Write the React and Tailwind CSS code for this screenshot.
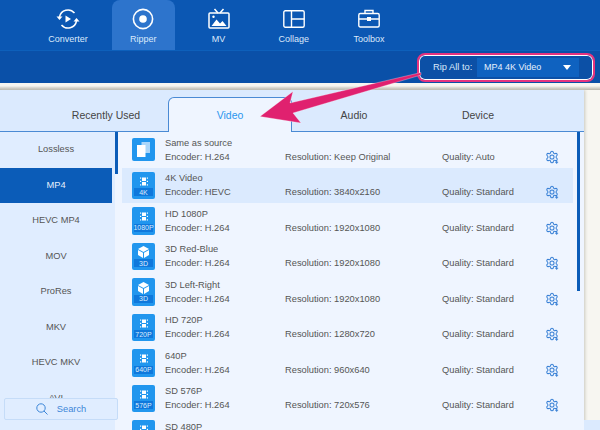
const navItems = [
  { label: 'Converter', icon: <ConverterIcon /> },
  { label: 'Ripper', icon: <RipperIcon />, active: true },
  { label: 'MV', icon: <MvIcon /> },
  { label: 'Collage', icon: <CollageIcon /> },
  { label: 'Toolbox', icon: <ToolboxIcon /> },
];

const categories = ['Lossless', 'MP4', 'HEVC MP4', 'MOV', 'ProRes', 'MKV', 'HEVC MKV', 'AVI'];

const formats = [
  { name: 'Same as source', encoder: 'H.264', resolution: 'Keep Original', quality: 'Auto', kind: 'source' },
  { name: '4K Video', encoder: 'HEVC', resolution: '3840x2160', quality: 'Standard', tag: '4K', kind: 'film', active: true },
  { name: 'HD 1080P', encoder: 'H.264', resolution: '1920x1080', quality: 'Standard', tag: '1080P', kind: 'film' },
  { name: '3D Red-Blue', encoder: 'H.264', resolution: '1920x1080', quality: 'Standard', tag: '3D', kind: 'cube' },
  { name: '3D Left-Right', encoder: 'H.264', resolution: '1920x1080', quality: 'Standard', tag: '3D', kind: 'cube' },
  { name: 'HD 720P', encoder: 'H.264', resolution: '1280x720', quality: 'Standard', tag: '720P', kind: 'film' },
  { name: '640P', encoder: 'H.264', resolution: '960x640', quality: 'Standard', tag: '640P', kind: 'film' },
  { name: 'SD 576P', encoder: 'H.264', resolution: '720x576', quality: 'Standard', tag: '576P', kind: 'film' },
  { name: 'SD 480P', encoder: 'H.264', resolution: '640x480', quality: 'Standard', tag: '480P', kind: 'film' },
];

function ConverterIcon() {
  return (
    <svg width="26" height="24" viewBox="0 0 26 24" fill="none" stroke="#fff" strokeWidth="1.5">
      <path d="M4.500 10A8.600 8.600 0 0 1 19.500 6" />
      <path d="M21.500 14A8.600 8.600 0 0 1 6.500 18" />
      <path d="M1.500 9.500h6l-3 3.500z" fill="#fff" stroke="none" />
      <path d="M18.500 14.500h6l-3-3.500z" fill="#fff" stroke="none" />
      <path d="M10.500 8.500l5.500 3.500-5.500 3.500z" fill="#fff" stroke="none" />
    </svg>
  );
}

function RipperIcon() {
  return (
    <svg width="22" height="22" viewBox="0 0 22 22" fill="none">
      <circle cx="11" cy="11" r="9.600" stroke="#fff" strokeWidth="1.600" />
      <circle cx="11" cy="11" r="3.800" fill="#fff" />
    </svg>
  );
}

function MvIcon() {
  return (
    <svg width="22" height="22" viewBox="0 0 22 22" fill="none" stroke="#fff" strokeWidth="1.500">
      <path d="M6.500 1l3.500 4M15.500 1L12 5" />
      <rect x="1" y="5" width="20" height="15" rx="1" />
      <path d="M3.500 18l5-6.500 3.500 4 2.500-2.500 4 5z" fill="#fff" stroke="none" />
      <circle cx="5.500" cy="8.800" r="1.200" fill="#fff" stroke="none" />
    </svg>
  );
}

function CollageIcon() {
  return (
    <svg width="22" height="18" viewBox="0 0 22 18" fill="none" stroke="#fff" strokeWidth="1.400">
      <rect x="0.800" y="0.800" width="20.400" height="16.400" rx="1.500" />
      <path d="M8.500 1v16M8.500 9h13" />
    </svg>
  );
}

function ToolboxIcon() {
  return (
    <svg width="22" height="19" viewBox="0 0 22 19" fill="none" stroke="#fff" strokeWidth="1.400">
      <rect x="0.800" y="4.500" width="20.400" height="13.500" rx="1.500" />
      <path d="M7 4.500V1.500h8v3M1 10h20" />
      <rect x="9" y="8" width="4" height="4" fill="#fff" stroke="none" />
    </svg>
  );
}

function GearIcon() {
  return (
    <svg width="14" height="14" viewBox="0 0 24 24" fill="none" stroke="#3b82d6" strokeWidth="1.800">
      <path d="M9.671 4.136a2.34 2.34 0 0 1 4.659 0 2.34 2.34 0 0 0 3.319 1.915 2.34 2.34 0 0 1 2.33 4.033 2.34 2.34 0 0 0 0 3.831 2.34 2.34 0 0 1-2.33 4.033 2.34 2.34 0 0 0-3.319 1.915 2.34 2.34 0 0 1-4.659 0 2.34 2.34 0 0 0-3.32-1.915 2.34 2.34 0 0 1-2.33-4.033 2.34 2.34 0 0 0 0-3.831A2.34 2.34 0 0 1 6.35 6.051a2.34 2.34 0 0 0 3.32-1.915" />
      <circle cx="12" cy="12" r="3.500" />
      <path d="M20 18.500v5M17.500 21h5" />
    </svg>
  );
}

function FormatGlyph({ kind }) {
  if (kind === 'cube') {
    return (
      <svg width="11" height="12" viewBox="0 0 11 12">
        <path d="M5.500 0L11 3 5.500 6 0 3z" fill="#fff" />
        <path d="M0 4l5 2.800V12L0 9zM11 4L6 6.800V12l5-3z" fill="#fff" />
      </svg>
    );
  }
  return (
    <svg width="8" height="9" viewBox="0 0 8 9" fill="#fff">
      <rect x="2" y="0.500" width="4" height="3.500" />
      <rect x="2" y="5" width="4" height="3.500" />
      <rect x="0" y="0.500" width="1.200" height="1.200" />
      <rect x="6.800" y="0.500" width="1.200" height="1.200" />
      <rect x="0" y="3.800" width="1.200" height="1.200" />
      <rect x="6.800" y="3.800" width="1.200" height="1.200" />
      <rect x="0" y="7.300" width="1.200" height="1.200" />
      <rect x="6.800" y="7.300" width="1.200" height="1.200" />
    </svg>
  );
}

function FormatIcon({ kind, tag }) {
  if (kind === 'source') {
    return (
      <div className="flex h-[23px] w-[23px] shrink-0 items-center justify-center rounded-[2px] bg-[#2196ee]">
        <svg width="13" height="15" viewBox="0 0 13 15">
          <rect x="4.500" y="0" width="8.500" height="11" fill="#a9d6fa" />
          <rect x="0" y="3" width="8.500" height="12" fill="#fff" />
        </svg>
      </div>
    );
  }
  return (
    <div className="flex h-[27.5px] w-[23px] shrink-0 flex-col items-center rounded-[2px] bg-[#2196ee] pt-[3px]">
      <div className="flex h-[13.5px] items-center">
        <FormatGlyph kind={kind} />
      </div>
      <div className="flex h-[8px] w-[19px] items-center justify-center bg-[#0f78dc] text-[7px] leading-none text-[#dcecfc]">
        {tag}
      </div>
    </div>
  );
}

function FormatRow({ format }) {
  return (
    <div className={`flex h-[35.5px] shrink-0 items-center gap-[10px] pl-[10px] ${format.active ? 'bg-[#dbeafe]' : ''}`}>
      <FormatIcon kind={format.kind} tag={format.tag} />
      <div className="flex flex-col text-[9.3px] leading-[14px] text-[#555]">
        <div>{format.name}</div>
        <div className="flex items-center">
          <span className="w-[120px]">Encoder: {format.encoder}</span>
          <span className="w-[157px]">Resolution: {format.resolution}</span>
          <span className="w-[103px]">Quality: {format.quality}</span>
          <GearIcon />
        </div>
      </div>
    </div>
  );
}

export default function App() {
  return (
    <div className="relative flex h-[430px] w-[600px] flex-col overflow-hidden bg-[#f7f6f1] font-['Liberation_Sans',sans-serif]">
      {/* top nav */}
      <div className="flex h-[50px] shrink-0 gap-[12.25px] bg-[#0b57b3] pl-[36.5px]">
        {navItems.map((item) => (
          <div
            key={item.label}
            className={`flex w-[63px] flex-col items-center rounded-t-lg ${item.active ? 'bg-[#2d74cc]' : ''}`}
          >
            <div className="flex h-[32px] items-center pt-[5px]">{item.icon}</div>
            <div className="mt-[1px] text-[9px] leading-[12px] text-[#dbe9fb]">{item.label}</div>
          </div>
        ))}
      </div>

      {/* rip all bar */}
      <div className="flex h-[33px] shrink-0 justify-end border-t border-[#0d60bb] bg-[#0a50a8] pt-[2px] pr-[5px]">
        <div className="flex h-[29px] w-[178px] items-center rounded-lg border-2 border-[#e6337f] bg-[#0c50a6] pl-[14px] shadow-[inset_0_0_0_1px_#fff]">
          <span className="w-[44px] pt-[1px] text-[9.3px] leading-none text-[#dbe9fb]">Rip All to:</span>
          <div className="flex h-[19px] w-[102px] items-center justify-between bg-[#0f62c0] pr-[8px] pl-[7px] text-[9px] text-[#e6f0fc]">
            <span>MP4 4K Video</span>
            <span className="h-0 w-0 border-x-[4px] border-t-[5px] border-x-transparent border-t-white" />
          </div>
        </div>
      </div>

      <div className="h-[7px] shrink-0 bg-gradient-to-b from-[#f7f6f1] from-40% to-[#b8b5ab]" />

      {/* ripper panel */}
      <div className="flex min-h-0 flex-1">
        <div className="flex w-[584px] shrink-0 flex-col bg-[#eff5ff] shadow-[1px_0_3px_#c9c7bd]">
          <div className="flex h-[42px] shrink-0 items-end border-b border-[#4a8ad4] bg-[#dbeafe] pl-[44px]">
            {['Recently Used', 'Video', 'Audio', 'Device'].map((tab) =>
              tab === 'Video' ? (
                <div
                  key={tab}
                  className="-mb-px flex h-[35px] w-[124px] items-center justify-center rounded-t-md border border-b-0 border-[#4a8ad4] bg-[#eff5ff] pt-[1px] text-[10.5px] text-[#2b95ee]"
                >
                  {tab}
                </div>
              ) : (
                <div key={tab} className="flex h-[34px] w-[124px] items-center justify-center pt-[4px] text-[10.5px] text-[#444]">
                  {tab}
                </div>
              ),
            )}
          </div>

          <div className="flex min-h-0 flex-1">
            {/* categories */}
            <div className="relative flex w-[118px] shrink-0">
              <div className="w-[115px] shrink-0 overflow-hidden bg-[#e0edff]">
                {categories.map((cat) => (
                  <div
                    key={cat}
                    className={`flex h-[35.5px] w-[112px] items-center justify-center pt-[1px] text-[9.3px] ${cat === 'MP4' ? 'bg-[#0b5cb8] text-[#e6f0fc]' : 'text-[#555]'}`}
                  >
                    {cat}
                  </div>
                ))}
              </div>
              <div className="h-[42px] w-[3px] shrink-0 bg-[#0b5cb8]" />
              <div className="absolute top-[266px] left-[4px] flex h-[22px] w-[114px] items-center justify-center gap-[9px] rounded-[2px] border border-[#c5dcf8] bg-[#e0edff] text-[9.3px] text-[#3c86d8]">
                <svg width="12" height="12" viewBox="0 0 12 12" fill="none" stroke="#3c86d8" strokeWidth="1">
                  <circle cx="5" cy="5" r="4.200" />
                  <path d="M8 8l3.500 3.500" />
                </svg>
                <span className="pt-[1px]">Search</span>
              </div>
            </div>

            {/* formats */}
            <div className="ml-[4px] flex min-h-0 min-w-0 flex-1 overflow-hidden">
              <div className="flex w-[451px] shrink-0 flex-col">
                {formats.map((format) => (
                  <FormatRow key={format.name} format={format} />
                ))}
              </div>
              <div className="ml-[4px] h-[159px] w-[3px] shrink-0 bg-[#0b5cb8]" />
            </div>
          </div>
        </div>
        <div className="flex flex-1 flex-col justify-end">
          <div className="h-[10px] bg-[#dbeafe]" />
        </div>
      </div>

      {/* annotation arrow */}
      <svg className="pointer-events-none absolute top-0 left-0" width="600" height="430" viewBox="0 0 600 430">
        <path d="M260 116.500L293 91.500 290 103 421 72.500 421 75 293 113 301 123z" fill="#e0216f" stroke="#fff" strokeOpacity="0.5" strokeWidth="0.6" />
      </svg>
    </div>
  );
}
